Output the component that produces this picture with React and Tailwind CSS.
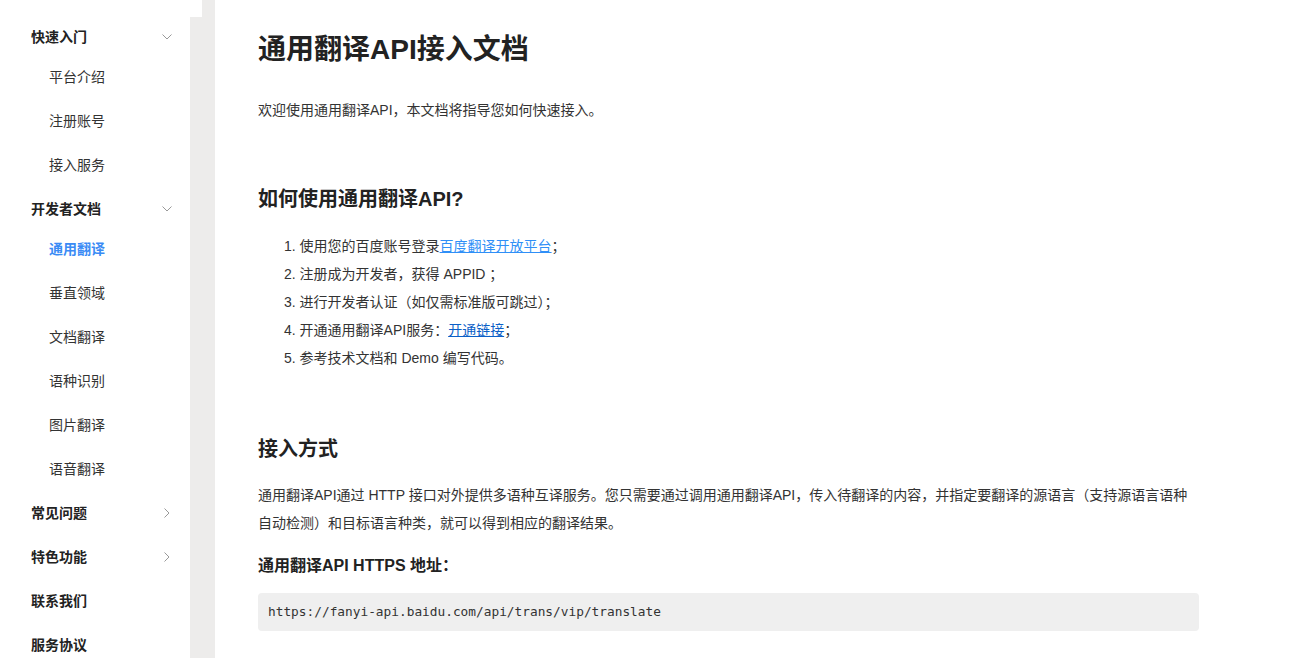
import React from "react";

const FONT = { fontFamily: '"Liberation Sans", "Noto Sans CJK SC", sans-serif' };

function ChevronDown() {
  return (
    <svg width="12" height="8" viewBox="0 0 12 8" fill="none" className="text-[#999]">
      <path d="M1.5 1.5 L6 6 L10.5 1.5" stroke="currentColor" strokeWidth="1" />
    </svg>
  );
}
function ChevronRight() {
  return (
    <svg width="8" height="12" viewBox="0 0 8 12" fill="none" className="text-[#999]">
      <path d="M1.5 1.5 L6 6 L1.5 10.5" stroke="currentColor" strokeWidth="1" />
    </svg>
  );
}

const groups = [
  { title: "快速入门", open: true, items: ["平台介绍", "注册账号", "接入服务"] },
  { title: "开发者文档", open: true, items: ["通用翻译", "垂直领域", "文档翻译", "语种识别", "图片翻译", "语音翻译"] },
  { title: "常见问题", arrow: "right" },
  { title: "特色功能", arrow: "right" },
  { title: "联系我们" },
  { title: "服务协议" },
];

function Sidebar() {
  return (
    <div className="flex shrink-0 h-[658px]">
      <nav className="w-[190px] bg-white pt-[15px]">
        {groups.map((g) => (
          <div key={g.title}>
            <div className="h-[44px] flex items-center justify-between pl-[31px] pr-[17px] text-[14px] font-bold text-[#222]">
              <span>{g.title}</span>
              {g.open && <ChevronDown />}
              {g.arrow === "right" && <span className="pr-[2px]"><ChevronRight /></span>}
            </div>
            {g.items && (
              <ul className="-mt-1">
                {g.items.map((it) => (
                  <li
                    key={it}
                    className={
                      "h-[44px] flex items-center pl-[49px] text-[14px] " +
                      (it === "通用翻译" ? "text-[#3a8bf5] font-bold" : "text-[#333]")
                    }
                  >
                    {it}
                  </li>
                ))}
              </ul>
            )}
          </div>
        ))}
      </nav>
      <div className="w-[25px] bg-[#edeceb] flex flex-col">
        <div className="w-[12px] h-[17px] bg-white" />
      </div>
    </div>
  );
}

function Main() {
  return (
    <main className="flex-1 pl-[43px] pt-[30px]">
      <div className="w-[941px] text-[#333]">
        <h1 className="text-[28px] leading-[40px] font-bold text-[#222]">通用翻译API接入文档</h1>
        <p className="mt-[26px] text-[14px] leading-[28px]">欢迎使用通用翻译API，本文档将指导您如何快速接入。</p>

        <h2 className="mt-[61px] text-[20px] leading-[28px] font-bold text-[#222]">如何使用通用翻译API?</h2>
        <ol className="mt-[19px] pl-[26px] text-[14px] leading-[28px]">
          <li>
            1. 使用您的百度账号登录<span className="text-[#2f8ff7] underline">百度翻译开放平台</span>；
          </li>
          <li>2. 注册成为开发者，获得 APPID ；</li>
          <li>3. 进行开发者认证（如仅需标准版可跳过）；</li>
          <li>
            4. 开通通用翻译API服务：<span className="text-[#0b5fc7] underline">开通链接</span>；
          </li>
          <li>5. 参考技术文档和 Demo 编写代码。</li>
        </ol>

        <h2 className="mt-[63px] text-[20px] leading-[28px] font-bold text-[#222]">接入方式</h2>
        <p className="mt-[18px] text-[14px] leading-[28px] pr-[10px]">
          通用翻译API通过 HTTP 接口对外提供多语种互译服务。您只需要通过调用通用翻译API，传入待翻译的内容，并指定要翻译的源语言（支持源语言语种自动检测）和目标语言种类，就可以得到相应的翻译结果。
        </p>

        <h3 className="mt-[17px] text-[16px] leading-[24px] font-bold text-[#222]">通用翻译API HTTPS 地址：</h3>
        <div className="mt-[15px] h-[38px] rounded bg-[#efefef] px-[10px] flex items-center">
          <code
            className="text-[12.8px] text-[#333]"
            style={{ fontFamily: '"DejaVu Sans Mono", "Liberation Mono", monospace' }}
          >
            https://fanyi-api.baidu.com/api/trans/vip/translate
          </code>
        </div>
      </div>
    </main>
  );
}

export default function App() {
  return (
    <div className="flex w-[1295px] h-[658px] overflow-hidden bg-white" style={FONT}>
      <Sidebar />
      <Main />
    </div>
  );
}
